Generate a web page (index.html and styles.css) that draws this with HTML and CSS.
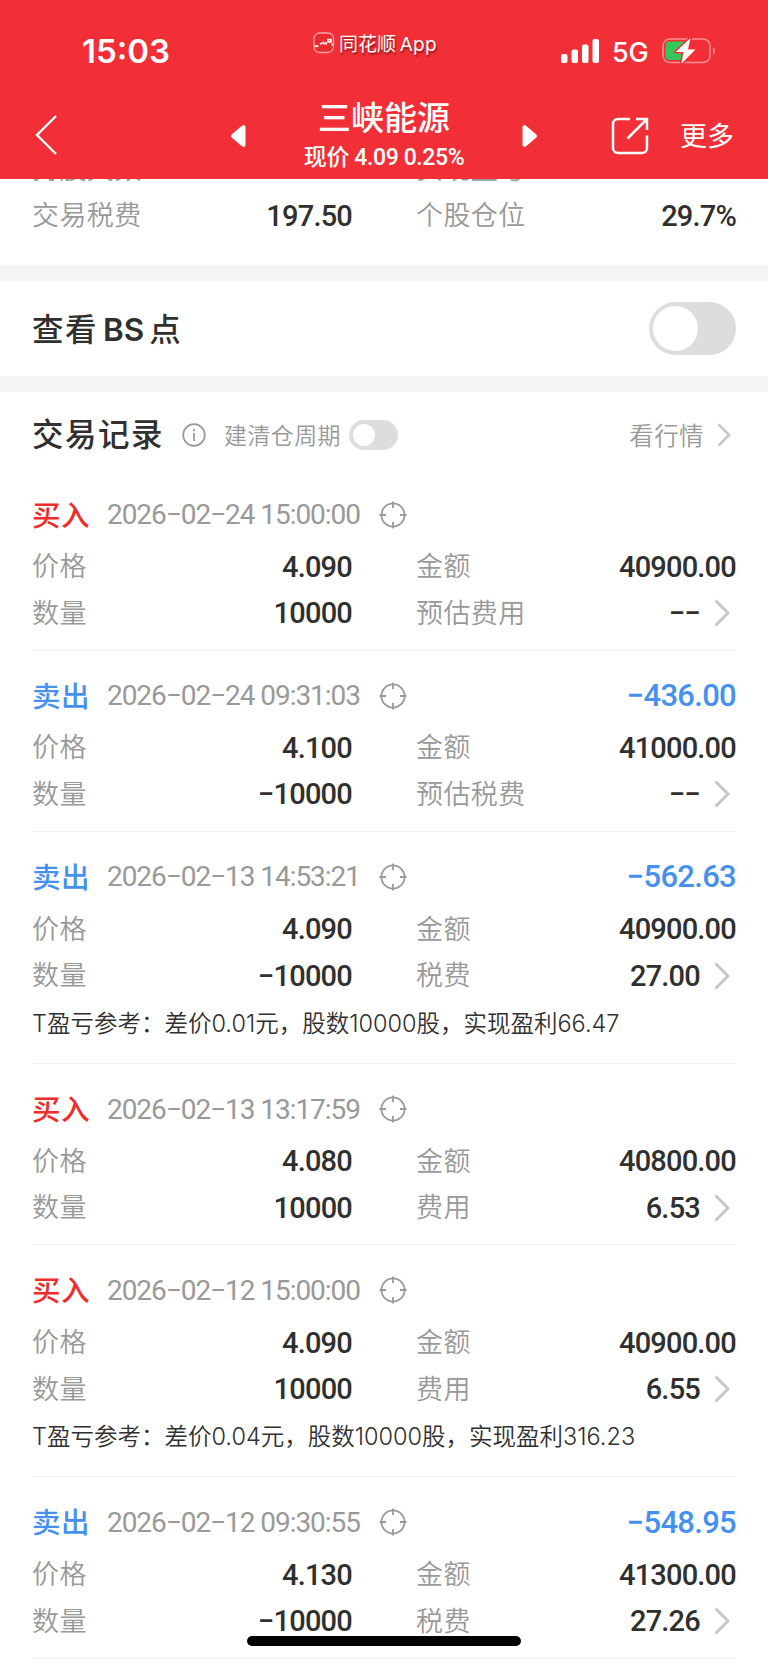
FILE: index.html
```html
<!DOCTYPE html>
<html lang="zh-CN">
<head>
  <meta charset="UTF-8" />
  <meta name="viewport" content="width=device-width, initial-scale=1.0"/>
  <title>三峡能源 - 交易记录</title>
  <link rel="stylesheet" href="styles.css">
</head>
<body>
  <svg width="0" height="0" class="defs">
    <symbol id="target" viewBox="0 0 28 28">
      <circle cx="14" cy="14" r="11.6"/>
      <path d="M14 .5v6.5M14 21v6.5M.5 14H7M21 14h6.5"/>
    </symbol>
    <symbol id="arrow" viewBox="0 0 16 28">
      <path d="M1.500 1.500L14 14L1.500 26.500"/>
    </symbol>
  </svg>

  <header class="header">
    <div class="status">
      <div class="time">15:03</div>
      <div class="app">
        <svg width="22" height="22" viewBox="0 0 22 22">
          <rect x="1" y="1" width="19.500" height="19.500" rx="5.500" fill="#e92b31" stroke="#fba4a6" stroke-width="1.300"/>
          <path d="M1.500 13.500l2 .8 2-.5M7 12l2.500-1M10 9.500l1.500 3M12.500 10l1 2.500M15 7.500h3v2.500h-3zM18.500 12l1.500 1" fill="none" stroke="#fff" stroke-width="1.600"/>
        </svg>
        <span>同花顺<i> App</i></span>
      </div>
      <div class="signal">
        <svg width="39" height="25" viewBox="0 0 39 25" fill="#fff">
          <rect x="0" y="15" width="6.500" height="9" rx="2"/>
          <rect x="10.500" y="10.500" width="6.500" height="13.500" rx="2"/>
          <rect x="21" y="5.500" width="6.500" height="18.500" rx="2"/>
          <rect x="31.500" y="0" width="6.500" height="24" rx="2"/>
        </svg>
        <span>5G</span>
        <svg width="54" height="28" viewBox="0 0 54 28">
          <rect x="1" y="2" width="47" height="23.500" rx="7" fill="none" stroke="#f98f92" stroke-width="1.600"/>
          <path d="M51 10.200c2.600 1 2.600 6 0 7z" fill="#f98f92"/>
          <path d="M7.500 4.500H24V23H7.500a4 4 0 0 1-4-4V8.500a4 4 0 0 1 4-4z" fill="#34c759"/>
          <path d="M28.500 1L13.500 15h8L19.500 26.500L33.500 12.500h-7.500z" fill="#fff" stroke="#f22f37" stroke-width="3" paint-order="stroke" stroke-linejoin="round"/>
        </svg>
      </div>
    </div>
    <nav class="nav">
      <svg class="back" width="24" height="42" viewBox="0 0 24 42"><path d="M21 2L2 21L21 40"/></svg>
      <div class="stock">
        <svg width="17" height="24" viewBox="0 0 17 24"><path d="M13.500 3V21L3 12z"/></svg>
        <div class="stock-name">
          <h1>三峡能源</h1>
          <p>现价 4.09 0.25%</p>
        </div>
        <svg width="17" height="24" viewBox="0 0 17 24"><path d="M3.500 3V21L14 12z"/></svg>
      </div>
      <div class="actions">
        <svg width="38" height="38" viewBox="0 0 38 38"><path d="M19 2H7a5 5 0 0 0-5 5v24a5 5 0 0 0 5 5h24a5 5 0 0 0 5-5V18.500M25 2h11v11M36 2L16.500 21.500"/></svg>
        <span>更多</span>
      </div>
    </nav>
  </header>

  <main class="page">
    <section class="summary">
      <div class="cell"><span>持股天数</span><b></b></div>
      <div class="cell"><span>实现盈亏</span><b></b></div>
      <div class="cell"><span>交易税费</span><b>197.50</b></div>
      <div class="cell"><span>个股仓位</span><b>29.7%</b></div>
    </section>

    <section class="bs">
      <h2>查看<i>BS</i>点</h2>
      <div class="switch"></div>
    </section>

    <section class="list">
      <div class="list-head">
        <h2>交易记录</h2>
        <svg class="info" width="24" height="24" viewBox="0 0 24 24"><circle cx="12" cy="12" r="10.800"/><path d="M12 10v8M12 6v2.200"/></svg>
        <span class="cycle">建清仓周期</span>
        <div class="switch small"></div>
        <span class="quote">看行情</span>
        <svg class="arrow" width="14" height="24"><use href="#arrow"/></svg>
      </div>
      <div id="records"></div>
    </section>
  </main>
  <div class="home-bar"></div>

  <script>
    // type, time, profit, price, count, amount, fee label, fee, note
    const records = [
      ["buy", "2026−02−24 15:00:00", "", "4.090", "10000", "40900.00", "预估费用", "−−", ""],
      ["sell", "2026−02−24 09:31:03", "−436.00", "4.100", "−10000", "41000.00", "预估税费", "−−", ""],
      ["sell", "2026−02−13 14:53:21", "−562.63", "4.090", "−10000", "40900.00", "税费", "27.00", "T盈亏参考：差价0.01元，股数10000股，实现盈利66.47"],
      ["buy", "2026−02−13 13:17:59", "", "4.080", "10000", "40800.00", "费用", "6.53", ""],
      ["buy", "2026−02−12 15:00:00", "", "4.090", "10000", "40900.00", "费用", "6.55", "T盈亏参考：差价0.04元，股数10000股，实现盈利316.23"],
      ["sell", "2026−02−12 09:30:55", "−548.95", "4.130", "−10000", "41300.00", "税费", "27.26", ""]
    ];

    document.getElementById("records").innerHTML = records.map(r => `
      <article class="record">
        <div class="record-head">
          <strong class="${r[0]}">${r[0] === "buy" ? "买入" : "卖出"}</strong>
          <time>${r[1]}</time>
          <svg class="target" width="28" height="28"><use href="#target"/></svg>
          <em>${r[2]}</em>
        </div>
        <div class="grid">
          <div class="cell"><span>价格</span><b>${r[3]}</b></div>
          <div class="cell"><span>金额</span><b>${r[5]}</b></div>
          <div class="cell"><span>数量</span><b>${r[4]}</b></div>
          <div class="cell"><span>${r[6]}</span><b>${r[7]}</b><svg class="arrow" width="16" height="28"><use href="#arrow"/></svg></div>
        </div>
        ${r[8] ? `<p class="note">${r[8]}</p>` : ""}
      </article>`).join("");
  </script>
</body>
</html>
```
FILE: styles.css
```css
* {
  box-sizing: border-box;
}
body {
  margin: 0;
  height: 1663px;
  overflow: hidden;
  background: #fff;
  font-family: Roboto, "Noto Sans CJK SC", sans-serif;
  color: #303030;
}
h1, h2, p {
  margin: 0;
}
i, em {
  font-style: normal;
}
svg {
  display: block;
  flex: none;
}
.defs {
  position: absolute;
}
.header {
  height: 179px;
  background: #f22f37;
  color: #fff;
}
.status {
  height: 93px;
  display: grid;
  grid-template-columns: 313px 1fr 207px;
}
.time {
  padding: 31px 0 0 82px;
  font: 600 33px/40px Inter, sans-serif;
}
.app {
  display: flex;
  gap: 4px;
  padding-top: 32px;
  font-size: 19px;
  line-height: 26px;
  text-shadow: 1px 2px 2px rgba(80, 0, 0, 0.6);
}
.app i {
  font-family: Inter, sans-serif;
  margin-left: -2px;
  letter-spacing: 0.3px;
}
.signal {
  display: flex;
  padding-top: 38px;
}
.signal span {
  width: 62px;
  padding-left: 12px;
  font: 500 27px/30px Inter, sans-serif;
  letter-spacing: -0.3px;
}
.signal svg:first-child {
  margin-top: 1px;
}
.signal svg:last-child {
  margin-top: -1px;
}
.nav {
  height: 86px;
  display: grid;
  grid-template-columns: 230px 308px 1fr;
}
.back {
  margin: 21px 0 0 35px;
  fill: none;
  stroke: #fff;
  stroke-width: 2.4;
}
.stock {
  display: flex;
  justify-content: space-between;
  align-items: flex-start;
}
.stock svg {
  margin-top: 31px;
  fill: #fff;
  stroke: #fff;
  stroke-width: 4;
  stroke-linejoin: round;
}
.stock-name {
  text-align: center;
}
.stock-name h1 {
  margin-top: 5px;
  font-size: 33px;
  line-height: 42px;
  font-weight: 500;
}
.stock-name p {
  font-size: 23px;
  line-height: 36px;
  font-weight: 500;
  letter-spacing: -0.4px;
}
.actions {
  display: flex;
  padding: 24px 0 0 73px;
  font-size: 27px;
  line-height: 41px;
}
.actions svg {
  fill: none;
  stroke: #fff;
  stroke-width: 2.5;
}
.actions span {
  margin-left: 31px;
}
.page {
  height: 1484px;
  overflow: hidden;
}
.summary, .grid {
  display: grid;
  grid-template-columns: 320px 320px;
  column-gap: 64px;
  grid-auto-rows: 46.5px;
}
.summary {
  height: 119px;
  margin-top: -33px;
  padding: 0 32px;
}
.cell {
  display: flex;
  align-items: center;
  line-height: 46px;
}
.cell span {
  padding-top: 1px;
  font-size: 27px;
  font-weight: 350;
  letter-spacing: 0.4px;
  color: #999;
}
.cell b {
  margin-left: auto;
  font-size: 29px;
  font-weight: 500;
  letter-spacing: -0.8px;
}
.arrow {
  fill: none;
  stroke: #c6c6c6;
  stroke-width: 2.9;
}
.cell .arrow {
  margin: 0 6px 0 14px;
}
.bs {
  height: 127px;
  border: solid #f4f4f4;
  border-width: 16px 0;
  padding: 0 32px;
  display: flex;
  align-items: center;
  justify-content: space-between;
}
h2 {
  padding-top: 3px;
  font-size: 31.5px;
  line-height: 44px;
  font-weight: 500;
  letter-spacing: 1.5px;
}
h2 i {
  margin: 0 5px;
  font-family: Inter, sans-serif;
  font-weight: 600;
  letter-spacing: 0;
}
.switch {
  width: 87px;
  height: 53px;
  border-radius: 27px;
  background: #ddd;
  padding: 4px;
}
.switch::before {
  content: "";
  display: block;
  width: 45px;
  height: 45px;
  border-radius: 50%;
  background: #fff;
}
.switch.small {
  width: 49px;
  height: 30px;
  margin-left: 8px;
}
.switch.small::before {
  width: 22px;
  height: 22px;
}
.list {
  padding: 0 32px;
}
.list-head {
  height: 77.5px;
  padding-top: 8px;
  display: flex;
  align-items: center;
}
.info {
  margin: 0 18px 0 18px;
  fill: none;
  stroke: #999;
  stroke-width: 1.7;
}
.cycle, .quote {
  padding-bottom: 1px;
  font-size: 23px;
  font-weight: 350;
  letter-spacing: 0.4px;
  color: #999;
}
.quote {
  margin-left: auto;
  font-size: 24.500px;
}
.list-head .arrow {
  margin: 0 5px 0 13px;
}
.record {
  padding: 26px 0 13.200px;
  border-bottom: 1px solid #f2f2f2;
}
.record-head {
  height: 38px;
  margin-bottom: 10px;
  display: flex;
  align-items: center;
}
.record-head strong {
  width: 75px;
  padding-bottom: 3px;
  font-size: 28.5px;
  font-weight: 500;
  letter-spacing: 0.6px;
}
.buy {
  color: #f12b2b;
}
.sell, .record-head em {
  color: #4691ee;
}
.record-head time {
  width: 272px;
  font-size: 28px;
  letter-spacing: -1.05px;
  color: #999;
}
.target {
  fill: none;
  stroke: #999;
  stroke-width: 1.8;
}
.record-head em {
  margin-left: auto;
  font-size: 31px;
  font-weight: 500;
  letter-spacing: -0.7px;
}
.note {
  height: 51px;
  font: 23.500px/50px Inter, "Noto Sans CJK SC", sans-serif;
  font-weight: 360;
  letter-spacing: 0;
}
.home-bar {
  position: absolute;
  left: 247px;
  top: 1636px;
  width: 274px;
  height: 10px;
  border-radius: 5px;
  background: #000;
}
```
